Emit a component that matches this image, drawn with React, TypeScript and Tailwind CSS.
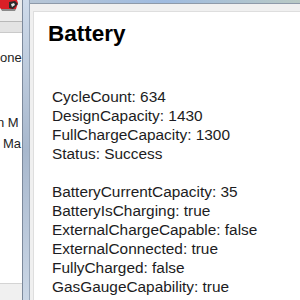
import React from "react";

const GROUP_A = [
  "CycleCount: 634",
  "DesignCapacity: 1430",
  "FullChargeCapacity: 1300",
  "Status: Success",
];

const GROUP_B = [
  "BatteryCurrentCapacity: 35",
  "BatteryIsCharging: true",
  "ExternalChargeCapable: false",
  "ExternalConnected: true",
  "FullyCharged: false",
  "GasGaugeCapability: true",
];

const font = { fontFamily: '"Liberation Sans", Arial, sans-serif' };

export default function App() {
  return (
    <div className="w-[300px] h-[300px] overflow-hidden flex bg-white" style={font}>
      {/* window behind, clipped */}
      <div className="w-[22px] h-full flex flex-col overflow-hidden whitespace-nowrap text-[13px] leading-[16px] text-[#1e1e1e]">
        <div className="h-[22px] shrink-0 bg-[#ececec] border-b border-[#b8b8b8]">
          <svg width="20" height="12" viewBox="0 0 20 12" className="block">
            <path d="M0 0h17l1 3-2 6-14 1-2-2z" fill="#d91f26" />
            <path d="M9 2l6-1 3 3-5 5-4-1z" fill="#2a2a2a" />
            <path d="M11 4l3-1 1 2-3 2z" fill="#e8e8e8" />
            <path d="M1 9l15 0-1 2H2z" fill="#8a8a8a" />
          </svg>
        </div>
        <div className="h-[11px] shrink-0 bg-[#e3e3e3] border-b border-[#cacaca]" />
        <div className="flex-1 flex flex-col bg-white">
          <div className="mt-[17px]">one</div>
          <div className="mt-[49px] -ml-[3px]">n M</div>
          <div className="mt-[5px] ml-[3px]">Ma</div>
          <div className="flex-1" />
          <div className="h-[17px] bg-[#f0f0f0] border-t border-[#d4d4d4]" />
        </div>
      </div>

      {/* dialog frame */}
      <div className="w-[8px] h-full shrink-0 border-l border-r border-l-[#7c899b] border-r-[#97a5b7] bg-gradient-to-b from-[#cfdbea] via-[#a8b8cd] to-[#cbd7e6]" />

      <div className="flex-1 h-full flex flex-col">
        <div className="h-[3px] shrink-0 bg-gradient-to-r from-[#b7c6d6] via-[#9fbbe0] to-[#b9c9c4]" />
        <div className="h-px shrink-0 bg-[#8e9aa9]" />
        <div className="flex-1 bg-[#f0f0f0] pt-[7px] pl-[3px] flex">
          <div className="flex-1 bg-white border-l border-t border-[#dedede] pt-[9px]">
            <div className="pl-[14px] text-[22.5px] leading-[26px] font-bold text-black">Battery</div>
            <div className="mt-[40px] pl-[18px] text-[15.4px] leading-[19px] text-[#1c1c22] whitespace-nowrap">
              {GROUP_A.map((l) => (
                <div key={l}>{l}</div>
              ))}
              <div className="h-[19px]" />
              {GROUP_B.map((l) => (
                <div key={l}>{l}</div>
              ))}
            </div>
          </div>
        </div>
      </div>
    </div>
  );
}
